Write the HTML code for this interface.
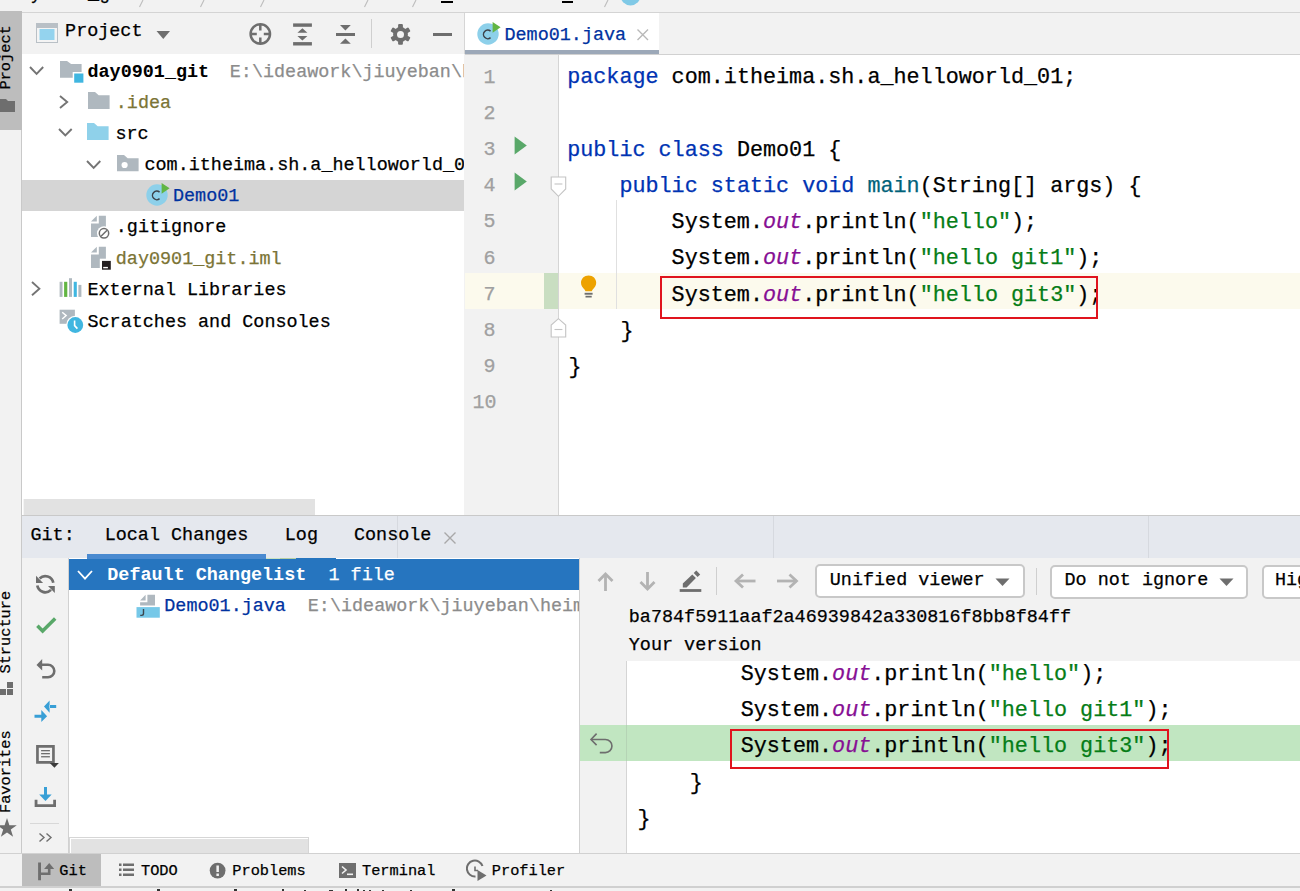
<!DOCTYPE html>
<html><head><meta charset="utf-8">
<style>
*{box-sizing:border-box}
html,body{margin:0;padding:0}
body{width:1300px;height:891px;position:relative;overflow:hidden;background:#f2f2f2;font-family:"Liberation Mono",monospace;color:#000}
.a{position:absolute;display:block}
.t{position:absolute;white-space:pre;line-height:1;-webkit-text-stroke:0.25px currentColor}
.k{color:#0033b3}
.s{color:#067d17}
.f{color:#871094;font-style:italic}
</style></head><body>
<div class="a" style="left:0px;top:0px;width:1300px;height:12px;background:#f2f2f2;"></div>
<div class="a" style="left:22px;top:12px;width:1278px;height:1px;background:#d4d4d4;"></div>
<div class="t" style="left:30.5px;top:-13.71px;font-size:18.43px;color:#000;">y</div>
<div class="t" style="left:88px;top:-13.71px;font-size:18.43px;color:#000;">_g</div>
<svg class="a" style="left:138px;top:0px;" width="7" height="8" viewBox="0 0 7 8"><path d="M5 0 L1.5 7" stroke="#bdbdbd" stroke-width="1.1"/></svg>
<svg class="a" style="left:199px;top:0px;" width="7" height="8" viewBox="0 0 7 8"><path d="M5 0 L1.5 7" stroke="#bdbdbd" stroke-width="1.1"/></svg>
<svg class="a" style="left:259px;top:0px;" width="7" height="8" viewBox="0 0 7 8"><path d="M5 0 L1.5 7" stroke="#bdbdbd" stroke-width="1.1"/></svg>
<svg class="a" style="left:362.5px;top:0px;" width="7" height="8" viewBox="0 0 7 8"><path d="M5 0 L1.5 7" stroke="#bdbdbd" stroke-width="1.1"/></svg>
<svg class="a" style="left:410.5px;top:0px;" width="7" height="8" viewBox="0 0 7 8"><path d="M5 0 L1.5 7" stroke="#bdbdbd" stroke-width="1.1"/></svg>
<svg class="a" style="left:603px;top:0px;" width="7" height="8" viewBox="0 0 7 8"><path d="M5 0 L1.5 7" stroke="#bdbdbd" stroke-width="1.1"/></svg>
<div class="a" style="left:440.6px;top:1px;width:12px;height:2px;background:#000;"></div>
<div class="a" style="left:561.7px;top:1px;width:11.3px;height:2px;background:#000;"></div>
<svg class="a" style="left:618px;top:0px;" width="26" height="8" viewBox="0 0 26 8"><circle cx="12.5" cy="-4.6" r="10" fill="#80c9e6"/></svg>
<div class="a" style="left:0px;top:12px;width:21px;height:842px;background:#f2f2f2;"></div>
<div class="a" style="left:21px;top:12px;width:1px;height:842px;background:#c9c9c9;"></div>
<div class="a" style="left:0px;top:11px;width:22px;height:119px;background:#bdbdbd;"></div>
<div class="t" style="left:0px;top:0px;font-size:15.3px;transform-origin:0 0;transform:translate(-1.5px,89.5px) rotate(-90deg);">Project</div>
<svg class="a" style="left:0px;top:98px;" width="16" height="15" viewBox="0 0 16 15"><path d="M0 1 H6 L8 3 H15 V14 H0 Z" fill="#6e6e6e"/></svg>
<div class="t" style="left:0px;top:0px;font-size:15.3px;transform-origin:0 0;transform:translate(-1.5px,673.5px) rotate(-90deg);">Structure</div>
<svg class="a" style="left:0px;top:681px;" width="14" height="15" viewBox="0 0 14 15"><rect x="0" y="8" width="6" height="6" fill="#6e6e6e"/><rect x="7" y="8" width="6" height="6" fill="#6e6e6e"/><rect x="7" y="1" width="6" height="6" fill="#6e6e6e"/></svg>
<div class="t" style="left:0px;top:0px;font-size:15.3px;transform-origin:0 0;transform:translate(-1.5px,813px) rotate(-90deg);">Favorites</div>
<svg class="a" style="left:-1px;top:816px;" width="18" height="22" viewBox="0 0 18 22"><path d="M8 2 L10.4 9.2 H17.8 L11.8 13.6 L14.1 20.8 L8 16.4 L1.9 20.8 L4.2 13.6 L-1.8 9.2 H5.6 Z" fill="#6e6e6e"/></svg>
<div class="a" style="left:22px;top:13px;width:442px;height:41px;background:#f2f2f2;"></div>
<div class="a" style="left:22px;top:54px;width:442px;height:461px;background:#fff;"></div>
<div class="a" style="left:464px;top:13px;width:1px;height:41px;background:#d6d6d6;"></div>
<div class="a" style="left:464px;top:54px;width:1px;height:461px;background:#f2f2f2;"></div>
<svg class="a" style="left:36px;top:23px;" width="23" height="21" viewBox="0 0 23 21"><rect x="0.5" y="0.5" width="21" height="19" fill="#f4f4f4" stroke="#b9c0c6"/><rect x="1" y="1" width="21" height="4" fill="#b9c0c6"/><rect x="3.5" y="6" width="15" height="11" fill="#94d3ee"/></svg>
<div class="t" style="left:65.1px;top:23.29px;font-size:18.43px;color:#000;">Project</div>
<svg class="a" style="left:156px;top:30px;" width="15" height="10" viewBox="0 0 15 10"><path d="M0.5 1 H14 L7.25 9 Z" fill="#6e6e6e"/></svg>
<svg class="a" style="left:248px;top:22px;" width="25" height="25" viewBox="0 0 25 25"><circle cx="12.3" cy="12" r="9.7" fill="none" stroke="#6e6e6e" stroke-width="2.5"/><path d="M12.3 3 V8.5 M12.3 15.5 V21 M3.3 12 H8.8 M15.8 12 H21.3" stroke="#6e6e6e" stroke-width="2.5"/></svg>
<svg class="a" style="left:288px;top:20px;" width="72" height="28" viewBox="0 0 72 28"><rect x="5.1" y="3.4" width="18.8" height="3.4" fill="#6e6e6e"/><rect x="5.1" y="22.1" width="18.8" height="3.4" fill="#6e6e6e"/><path d="M14.4 8.3 L19.4 12.7 H9.4 Z M14.4 20.5 L19.4 16.1 H9.4 Z" fill="#6e6e6e"/><rect x="48" y="13" width="19" height="3" fill="#6e6e6e"/><path d="M57.4 10.5 L62.8 5 H52 Z M57.4 18.5 L62.8 23.8 H52 Z" fill="#6e6e6e"/></svg>
<div class="a" style="left:371px;top:19px;width:1px;height:29px;background:#cfcfcf;"></div>
<svg class="a" style="left:389px;top:23px;" width="23" height="23" viewBox="0 0 23 23"><g transform="translate(11.5,11.4)" fill="#6e6e6e"><circle r="7.4"/><rect x="-2.4" y="-10.3" width="4.8" height="5" rx="1" transform="rotate(0)"/><rect x="-2.4" y="-10.3" width="4.8" height="5" rx="1" transform="rotate(60)"/><rect x="-2.4" y="-10.3" width="4.8" height="5" rx="1" transform="rotate(120)"/><rect x="-2.4" y="-10.3" width="4.8" height="5" rx="1" transform="rotate(180)"/><rect x="-2.4" y="-10.3" width="4.8" height="5" rx="1" transform="rotate(240)"/><rect x="-2.4" y="-10.3" width="4.8" height="5" rx="1" transform="rotate(300)"/><circle r="3.5" fill="#f2f2f2"/></g></svg>
<div class="a" style="left:433px;top:33px;width:19px;height:2.6px;background:#6e6e6e;"></div>
<div class="a" style="left:22px;top:180px;width:442px;height:31px;background:#d5d5d5;"></div>
<svg class="a" style="left:27.8px;top:65.1px;" width="17.2" height="10.900000000000006" viewBox="0 0 17.2 10.900000000000006"><path d="M2 2 L8.6 8.900000000000006 L15.2 2" fill="none" stroke="#747474" stroke-width="1.9"/></svg>
<svg class="a" style="left:59.6px;top:61.2px;" width="26" height="24" viewBox="0 0 26 24"><path d="M0 0 H7 L11.1 3.1 H21.6 V16.8 H0 Z" fill="#afb8bf"/><rect x="12.7" y="11" width="11.7" height="11.7" fill="#fff"/><rect x="14.2" y="12.5" width="9.2" height="9.2" fill="#40b6e0"/></svg>
<div class="t" style="left:87.5px;top:64.29px;font-size:18.43px;color:#000;font-weight:700;-webkit-text-stroke:0;">day0901_git</div>
<div class="t" style="left:229.8px;top:64.29px;font-size:18.43px;color:#8c8c8c;width:234.2px;overflow:hidden;">E:\ideawork\jiuyeban\heima</div>
<svg class="a" style="left:58px;top:93.5px;" width="11.200000000000003" height="16.099999999999994" viewBox="0 0 11.200000000000003 16.099999999999994"><path d="M2 2 L9.200000000000003 8.049999999999997 L2 14.099999999999994" fill="none" stroke="#747474" stroke-width="1.9"/></svg>
<svg class="a" style="left:87.7px;top:92.1px;" width="24" height="20" viewBox="0 0 24 20"><path d="M0 0 H7 L10.7 3.2 H21.6 V17 H0 Z" fill="#afb8bf"/></svg>
<div class="t" style="left:115.8px;top:95.29px;font-size:18.43px;color:#7b7435;">.idea</div>
<svg class="a" style="left:56.8px;top:127.4px;" width="16.700000000000003" height="10.5" viewBox="0 0 16.700000000000003 10.5"><path d="M2 2 L8.350000000000001 8.5 L14.700000000000003 2" fill="none" stroke="#747474" stroke-width="1.9"/></svg>
<svg class="a" style="left:87.4px;top:123.2px;" width="24" height="20" viewBox="0 0 24 20"><path d="M0 0 H7 L10.7 3.2 H21.6 V17 H0 Z" fill="#8fd1ea"/></svg>
<div class="t" style="left:115.4px;top:126.09px;font-size:18.43px;color:#000;">src</div>
<svg class="a" style="left:84.8px;top:159.3px;" width="17.299999999999997" height="10.899999999999977" viewBox="0 0 17.299999999999997 10.899999999999977"><path d="M2 2 L8.649999999999999 8.899999999999977 L15.299999999999997 2" fill="none" stroke="#747474" stroke-width="1.9"/></svg>
<svg class="a" style="left:116.6px;top:155.4px;" width="24" height="20" viewBox="0 0 24 20"><path d="M0 0 H7 L10.7 3.2 H21.6 V16.3 H0 Z" fill="#afb8bf"/><circle cx="7.6" cy="10" r="3.1" fill="#fff"/></svg>
<div class="t" style="left:144.5px;top:157.19px;font-size:18.43px;color:#000;width:319.5px;overflow:hidden;">com.itheima.sh.a_helloworld_01</div>
<svg class="a" style="left:144.5px;top:181.4px;" width="28" height="28" viewBox="0 0 28 28"><circle cx="12" cy="14" r="10.7" fill="#8dd0ea"/><path d="M14.56 11.11 A4.3 4.3 0 1 0 14.56 17.69" fill="none" stroke="#3d434a" stroke-width="1.5"/><path d="M16.6 1.9000000000000004 L24.6 7.3 L16.6 12.7 Z" fill="#62b543"/></svg>
<div class="t" style="left:173px;top:188.09px;font-size:18.43px;color:#0032a0;">Demo01</div>
<svg class="a" style="left:86px;top:211px;" width="32" height="32" viewBox="0 0 32 32"><path d="M5 10.6 L10.8 4.8 V10.6 Z" fill="#afb8bf"/><path d="M12.8 4.7 H19.9 V25.9 H5 V12.4 H12.8 Z" fill="#afb8bf"/><circle cx="18" cy="22.3" r="7" fill="#fff"/><circle cx="18" cy="22.3" r="4.7" fill="none" stroke="#6e6e6e" stroke-width="1.5"/><path d="M15 25.3 L21.1 19.3" stroke="#6e6e6e" stroke-width="1.5"/></svg>
<div class="t" style="left:115.8px;top:219.49px;font-size:18.43px;color:#000;">.gitignore</div>
<svg class="a" style="left:86px;top:242px;" width="32" height="32" viewBox="0 0 32 32"><path d="M5 10.6 L10.8 4.8 V10.6 Z" fill="#afb8bf"/><path d="M12.8 4.7 H19.9 V25.9 H5 V12.4 H12.8 Z" fill="#afb8bf"/><rect x="13.8" y="16.7" width="13" height="13" fill="#fff"/><rect x="16" y="18.9" width="8.8" height="8.8" fill="#231f20"/><rect x="17.2" y="24.9" width="4.7" height="1.4" fill="#fff"/></svg>
<div class="t" style="left:115.8px;top:250.99px;font-size:18.43px;color:#7b7435;">day0901_git.iml</div>
<svg class="a" style="left:30.1px;top:280.2px;" width="11.399999999999999" height="17.30000000000001" viewBox="0 0 11.399999999999999 17.30000000000001"><path d="M2 2 L9.399999999999999 8.650000000000006 L2 15.300000000000011" fill="none" stroke="#747474" stroke-width="1.9"/></svg>
<svg class="a" style="left:59px;top:277px;" width="24" height="21" viewBox="0 0 24 21"><rect x="0.6" y="4.8" width="2.9" height="15.1" fill="#afb8bf"/><rect x="5.1" y="4.8" width="3.2" height="15.1" fill="#62b543"/><rect x="10" y="1.2" width="3" height="18.7" fill="#afb8bf"/><rect x="14.7" y="4.8" width="3.1" height="15.1" fill="#40b6e0"/><rect x="19.4" y="7.9" width="3" height="12" fill="#afb8bf"/></svg>
<div class="t" style="left:87.5px;top:281.69px;font-size:18.43px;color:#000;">External Libraries</div>
<svg class="a" style="left:59px;top:308px;" width="26" height="28" viewBox="0 0 26 28"><rect x="0.6" y="1.7" width="15.3" height="14.1" fill="#afb8bf"/><path d="M3.2 4.2 L7.2 7.6 L3.2 11" fill="none" stroke="#fff" stroke-width="1.4"/><circle cx="16.3" cy="17" r="9.2" fill="#fff"/><circle cx="16.3" cy="17" r="7.9" fill="#40b6e0"/><path d="M15.6 12.6 V17.6 L18.4 20.6" fill="none" stroke="#fff" stroke-width="1.6"/></svg>
<div class="t" style="left:87.5px;top:313.99px;font-size:18.43px;color:#000;">Scratches and Consoles</div>
<div class="a" style="left:23px;top:499px;width:292px;height:16px;background:#e2e2e2;"></div>
<div class="a" style="left:23px;top:499px;width:1px;height:16px;background:#f4f4f4;"></div>
<div class="a" style="left:465px;top:13px;width:835px;height:41px;background:#f2f2f2;"></div>
<div class="a" style="left:465px;top:13px;width:194px;height:37px;background:#fff;"></div>
<div class="a" style="left:465px;top:50px;width:194px;height:4px;background:#9ca8b8;"></div>
<div class="a" style="left:465px;top:54px;width:835px;height:1px;background:#d1d1d1;"></div>
<svg class="a" style="left:475.5px;top:20.200000000000003px;" width="28" height="28" viewBox="0 0 28 28"><circle cx="12" cy="14" r="10.7" fill="#8dd0ea"/><path d="M14.56 11.11 A4.3 4.3 0 1 0 14.56 17.69" fill="none" stroke="#3d434a" stroke-width="1.5"/><path d="M16.6 1.9000000000000004 L24.6 7.3 L16.6 12.7 Z" fill="#62b543"/></svg>
<div class="t" style="left:504.5px;top:26.69px;font-size:18.43px;color:#0032a0;">Demo01.java</div>
<svg class="a" style="left:636px;top:28px;" width="14" height="14" viewBox="0 0 14 14"><path d="M1.5 1.5 L12 12 M12 1.5 L1.5 12" stroke="#b8b8b8" stroke-width="1.4"/></svg>
<div class="a" style="left:465px;top:55px;width:93px;height:460px;background:#f2f2f2;"></div>
<div class="a" style="left:559px;top:55px;width:741px;height:460px;background:#fff;"></div>
<div class="a" style="left:465px;top:273px;width:835px;height:36px;background:#fcfaed;"></div>
<div class="a" style="left:544px;top:273px;width:13.5px;height:36px;background:#c9dec1;"></div>
<div class="a" style="left:558px;top:55px;width:1px;height:460px;background:#d5d5d5;"></div>
<div class="a" style="left:616px;top:200px;width:1px;height:109px;background:#e0e0e0;"></div>
<div class="t" style="left:483.6px;top:67.60px;font-size:20px;color:#a0a0a0;">1</div>
<div class="t" style="left:483.6px;top:103.80px;font-size:20px;color:#a0a0a0;">2</div>
<div class="t" style="left:483.6px;top:140.00px;font-size:20px;color:#a0a0a0;">3</div>
<div class="t" style="left:483.6px;top:176.20px;font-size:20px;color:#a0a0a0;">4</div>
<div class="t" style="left:483.6px;top:212.40px;font-size:20px;color:#a0a0a0;">5</div>
<div class="t" style="left:483.6px;top:248.60px;font-size:20px;color:#a0a0a0;">6</div>
<div class="t" style="left:483.6px;top:284.80px;font-size:20px;color:#a0a0a0;">7</div>
<div class="t" style="left:483.6px;top:321.00px;font-size:20px;color:#a0a0a0;">8</div>
<div class="t" style="left:483.6px;top:357.20px;font-size:20px;color:#a0a0a0;">9</div>
<div class="t" style="left:472.40000000000003px;top:393.40px;font-size:20px;color:#a0a0a0;">10</div>
<svg class="a" style="left:514px;top:135.5px;" width="14" height="20" viewBox="0 0 14 20"><path d="M0.6 0.5 L12.8 9.5 L0.6 18.6 Z" fill="#59a869"/></svg>
<svg class="a" style="left:514px;top:171.7px;" width="14" height="20" viewBox="0 0 14 20"><path d="M0.6 0.5 L12.8 9.5 L0.6 18.6 Z" fill="#59a869"/></svg>
<svg class="a" style="left:550px;top:176px;" width="17" height="22" viewBox="0 0 17 22"><path d="M1.2 1 H15.7 V13 L8.45 20.3 L1.2 13 Z" fill="#fff" stroke="#c4c4c4" stroke-width="1.1"/><path d="M4.5 8 H12.4" stroke="#c4c4c4" stroke-width="1.1"/></svg>
<svg class="a" style="left:550px;top:317px;" width="17" height="22" viewBox="0 0 17 22"><path d="M1.2 20 H15.7 V8 L8.45 1.7 L1.2 8 Z" fill="#fff" stroke="#c4c4c4" stroke-width="1.1"/><path d="M4.5 12.5 H12.4" stroke="#c4c4c4" stroke-width="1.1"/></svg>
<svg class="a" style="left:579px;top:274px;" width="20" height="25" viewBox="0 0 20 25"><path d="M9.6 1.4 C5.2 1.4 2 4.6 2 8.8 C2 11.6 3.6 13.6 5.5 15.4 L6.5 17.2 H12.7 L13.7 15.4 C15.6 13.6 17.2 11.6 17.2 8.8 C17.2 4.6 14 1.4 9.6 1.4 Z" fill="#eda200"/><rect x="5.6" y="18.8" width="8" height="1.9" fill="#6e6e6e"/><rect x="6.5" y="21.8" width="6.2" height="1.7" fill="#6e6e6e"/></svg>
<div class="t" style="left:567.2px;top:67.37px;font-size:21.75px;color:#000;"><span class="k">package</span> com.itheima.sh.a_helloworld_01;</div>
<div class="t" style="left:567.2px;top:139.77px;font-size:21.75px;color:#000;"><span class="k">public class</span> Demo01 {</div>
<div class="t" style="left:567.2px;top:175.97px;font-size:21.75px;color:#000;">    <span class="k">public static void</span> <span style="color:#00627a">main</span>(String[] args) {</div>
<div class="t" style="left:567.2px;top:212.17px;font-size:21.75px;color:#000;">        System.<span class="f">out</span>.println(<span class="s">"hello"</span>);</div>
<div class="t" style="left:567.2px;top:248.37px;font-size:21.75px;color:#000;">        System.<span class="f">out</span>.println(<span class="s">"hello git1"</span>);</div>
<div class="t" style="left:567.2px;top:284.57px;font-size:21.75px;color:#000;">        System.<span class="f">out</span>.println(<span class="s">"hello git3"</span>);</div>
<div class="t" style="left:568.4000000000001px;top:320.77px;font-size:21.75px;color:#000;">    }</div>
<div class="t" style="left:568.4000000000001px;top:356.97px;font-size:21.75px;color:#000;">}</div>
<div class="a" style="left:660px;top:275.5px;width:437.5px;height:43.8px;border:2px solid #e0141e"></div>
<div class="a" style="left:22px;top:515px;width:1278px;height:43px;background:#e5e8ee;"></div>
<div class="a" style="left:22px;top:515px;width:1278px;height:1px;background:#c9c9c9;"></div>
<div class="a" style="left:397px;top:516px;width:1px;height:42px;background:#d6d9df;"></div>
<div class="a" style="left:773px;top:516px;width:1px;height:42px;background:#d6d9df;"></div>
<div class="a" style="left:1148px;top:516px;width:1px;height:42px;background:#d6d9df;"></div>
<div class="t" style="left:30.5px;top:526.99px;font-size:18.43px;color:#000;">Git:</div>
<div class="t" style="left:104.7px;top:527.29px;font-size:18.43px;color:#000;">Local Changes</div>
<div class="t" style="left:284.8px;top:527.29px;font-size:18.43px;color:#000;">Log</div>
<div class="t" style="left:354px;top:527.29px;font-size:18.43px;color:#000;">Console</div>
<svg class="a" style="left:443px;top:531px;" width="14" height="14" viewBox="0 0 14 14"><path d="M1.5 1.5 L12.5 12.5 M12.5 1.5 L1.5 12.5" stroke="#a8a8a8" stroke-width="1.4"/></svg>
<div class="a" style="left:86.5px;top:554px;width:179.5px;height:4px;background:#4083c9;"></div>
<div class="a" style="left:22px;top:558px;width:46px;height:296px;background:#f2f2f2;"></div>
<div class="a" style="left:68px;top:558px;width:1px;height:296px;background:#d1d1d1;"></div>
<div class="a" style="left:69px;top:558px;width:510px;height:296px;background:#fff;"></div>
<div class="a" style="left:579px;top:558px;width:1px;height:296px;background:#d1d1d1;"></div>
<div class="a" style="left:580px;top:558px;width:720px;height:296px;background:#f2f2f2;"></div>
<svg class="a" style="left:30px;top:568px;" width="32" height="32" viewBox="0 0 32 32"><path d="M9.6 10.5 A8.1 8.1 0 0 1 23.3 14.8" fill="none" stroke="#6e6e6e" stroke-width="2.7"/><path d="M6 7.7 V14.9 H13.1 Z" fill="#6e6e6e"/><path d="M7.3 17.6 A8.1 8.1 0 0 0 21 21.9" fill="none" stroke="#6e6e6e" stroke-width="2.7"/><path d="M24.8 25.1 V18 H18 Z" fill="#6e6e6e"/></svg>
<svg class="a" style="left:30px;top:610px;" width="32" height="32" viewBox="0 0 32 32"><path d="M7.4 15.8 L12.6 21 L25.2 8.4" fill="none" stroke="#59a869" stroke-width="3.5"/></svg>
<svg class="a" style="left:30px;top:653px;" width="32" height="32" viewBox="0 0 32 32"><path d="M12 11.7 H18 A6.3 6.3 0 0 1 18 24.3 H12.2" fill="none" stroke="#6e6e6e" stroke-width="2.6"/><path d="M12.2 6.1 L6.5 11.9 L12.2 17.6 Z" fill="#6e6e6e"/></svg>
<svg class="a" style="left:30px;top:694px;" width="32" height="32" viewBox="0 0 32 32"><path d="M19.6 6.6 L14 12.6 L19.6 18.7 Z M4.5 20.7 H11.5 V23.7 H4.5 Z M11.3 16 L17.1 22.3 L11.3 28 Z M19 11.1 H26.2 V14 H19 Z" fill="#389fd6"/></svg>
<svg class="a" style="left:30px;top:740px;" width="32" height="32" viewBox="0 0 32 32"><path d="M7.45 6.35 H23.45 V22.35 H7.45 Z" fill="none" stroke="#6e6e6e" stroke-width="2.7"/><rect x="11.1" y="10" width="8.8" height="1.3" fill="#6e6e6e"/><rect x="11.1" y="13" width="8.8" height="1.3" fill="#6e6e6e"/><rect x="11.1" y="16.1" width="8.8" height="1.3" fill="#6e6e6e"/><path d="M19.8 23 H28.9 L24.4 27.8 Z" fill="#3c3c3c"/></svg>
<svg class="a" style="left:30px;top:782px;" width="32" height="32" viewBox="0 0 32 32"><path d="M6.05 17.8 V23.6 H24.6 V17.8" fill="none" stroke="#6e6e6e" stroke-width="2.8"/><rect x="14" y="5" width="3" height="8" fill="#389fd6"/><path d="M9.2 12.4 H21.7 L15.45 19 Z" fill="#389fd6"/></svg>
<div class="a" style="left:30px;top:823px;width:29px;height:1px;background:#d8d8d8;"></div>
<svg class="a" style="left:37px;top:831px;" width="17" height="13" viewBox="0 0 17 13"><path d="M2.5 2.5 L7 6.5 L2.5 10.5 M9.5 2.5 L14 6.5 L9.5 10.5" fill="none" stroke="#6e6e6e" stroke-width="1.4"/></svg>
<div class="a" style="left:69px;top:559px;width:510px;height:31px;background:#2675bf;"></div>
<div class="a" style="left:86.5px;top:554px;width:179.5px;height:5px;background:#4a8ad0;"></div>
<div class="a" style="left:266px;top:558px;width:14px;height:1px;background:#c8e3c3;"></div>
<div class="a" style="left:280px;top:558px;width:16px;height:1px;background:#b5cfa5;"></div>
<div class="a" style="left:296px;top:558px;width:40px;height:1px;background:#2675bf;"></div>
<svg class="a" style="left:76px;top:568.6px;" width="18" height="11.699999999999932" viewBox="0 0 18 11.699999999999932"><path d="M2 2 L9.0 9.699999999999932 L16 2" fill="none" stroke="#fff" stroke-width="1.8"/></svg>
<div class="t" style="left:107.3px;top:566.99px;font-size:18.43px;color:#fff;font-weight:700;-webkit-text-stroke:0;">Default Changelist</div>
<div class="t" style="left:328.5px;top:566.99px;font-size:18.43px;color:#fff;">1 file</div>
<svg class="a" style="left:132px;top:590px;" width="32" height="32" viewBox="0 0 32 32"><path d="M8.1 10.6 L13.6 4.8 V10.6 Z" fill="#afb8bf"/><path d="M15.4 4.7 H23 V15.4 H8.1 V12.2 H15.4 Z" fill="#afb8bf"/><rect x="4.5" y="17.1" width="23.3" height="10.6" fill="#76c8e8"/><path d="M11.5 18.9 V23.6 Q11.5 25.4 9.6 25.4 H8.2" fill="none" stroke="#3c454d" stroke-width="1.4"/></svg>
<div class="t" style="left:164.3px;top:598.49px;font-size:18.43px;color:#0032a0;">Demo01.java</div>
<div class="t" style="left:307.8px;top:598.49px;font-size:18.43px;color:#8c8c8c;width:271.2px;overflow:hidden;">E:\ideawork\jiuyeban\heima</div>
<div class="a" style="left:69px;top:837px;width:240px;height:18px;background:#fff;border:1px solid #d6d6d6"></div>
<div class="a" style="left:70.5px;top:838.5px;width:237px;height:15.5px;background:#e2e2e2;"></div>
<svg class="a" style="left:596px;top:571px;" width="20" height="22" viewBox="0 0 20 22"><path d="M9.5 3 V20" stroke="#b3b3b3" stroke-width="2.8"/><path d="M2.5 10 L9.5 3 L16.5 10" fill="none" stroke="#b3b3b3" stroke-width="2.8"/></svg>
<svg class="a" style="left:638px;top:571px;" width="20" height="22" viewBox="0 0 20 22"><path d="M9.5 1 V18" stroke="#b3b3b3" stroke-width="2.8"/><path d="M2.5 11 L9.5 18 L16.5 11" fill="none" stroke="#b3b3b3" stroke-width="2.8"/></svg>
<svg class="a" style="left:674px;top:565px;" width="32" height="32" viewBox="0 0 32 32"><path d="M8.8 22.6 V18.6 L18.3 9.4 L21.9 13 L12.6 22.6 Z" fill="#6e6e6e"/><path d="M19.7 8 L22.3 5.5 L26.2 9.4 L23.6 11.9 Z" fill="#6e6e6e"/><rect x="5.7" y="24.1" width="21.6" height="2.8" fill="#6e6e6e"/></svg>
<div class="a" style="left:716px;top:567px;width:1px;height:27.5px;background:#cfcfcf;"></div>
<svg class="a" style="left:733px;top:572px;" width="24" height="18" viewBox="0 0 24 18"><path d="M3 9 H22.5" stroke="#b3b3b3" stroke-width="2.8"/><path d="M10 2.5 L3 9 L10 15.5" fill="none" stroke="#b3b3b3" stroke-width="2.8"/></svg>
<svg class="a" style="left:776px;top:572px;" width="24" height="18" viewBox="0 0 24 18"><path d="M1 9 H20.5" stroke="#b3b3b3" stroke-width="2.8"/><path d="M13.5 2.5 L20.5 9 L13.5 15.5" fill="none" stroke="#b3b3b3" stroke-width="2.8"/></svg>
<div class="a" style="left:815px;top:564.3px;width:209.5px;height:34.2px;background:#fff;border:2px solid #c8c8c8;border-radius:5px"></div>
<div class="t" style="left:829.8px;top:572.49px;font-size:18.43px;color:#000;">Unified viewer</div>
<svg class="a" style="left:995px;top:578px;" width="16" height="10" viewBox="0 0 16 10"><path d="M0.5 0.5 H14.5 L7.5 8 Z" fill="#6e6e6e"/></svg>
<div class="a" style="left:1036px;top:567.5px;width:1px;height:27px;background:#cfcfcf;"></div>
<div class="a" style="left:1050px;top:564.5px;width:198px;height:34px;background:#fff;border:2px solid #c8c8c8;border-radius:5px"></div>
<div class="t" style="left:1064.5px;top:572.49px;font-size:18.43px;color:#000;">Do not ignore</div>
<svg class="a" style="left:1218.5px;top:578px;" width="16" height="10" viewBox="0 0 16 10"><path d="M0.5 0.5 H14.5 L7.5 8 Z" fill="#6e6e6e"/></svg>
<div class="a" style="left:1262px;top:564.5px;width:80px;height:34px;background:#fff;border:2px solid #c8c8c8;border-radius:5px"></div>
<div class="t" style="left:1275px;top:572.49px;font-size:18.43px;color:#000;">Highlight words</div>
<div class="t" style="left:628.8px;top:609.29px;font-size:18.43px;color:#000;">ba784f5911aaf2a46939842a330816f8bb8f84ff</div>
<div class="t" style="left:628.8px;top:637.49px;font-size:18.43px;color:#000;">Your version</div>
<div class="a" style="left:580px;top:661px;width:46px;height:193px;background:#f2f2f2;"></div>
<div class="a" style="left:626px;top:661px;width:1px;height:193px;background:#d5d5d5;"></div>
<div class="a" style="left:627px;top:661px;width:673px;height:193px;background:#fff;"></div>
<div class="a" style="left:580px;top:725px;width:720px;height:36px;background:#c1e6c1;"></div>
<div class="a" style="left:626px;top:725px;width:1px;height:36px;background:#b5d4b5;"></div>
<svg class="a" style="left:586px;top:728px;" width="32" height="32" viewBox="0 0 32 32"><path d="M5.2 11.5 H19.4 A6.55 6.55 0 0 1 19.4 24.6 H13.8" fill="none" stroke="#6e6e6e" stroke-width="1.6"/><path d="M10.6 5.6 L5 11.5 L10.6 17.1" fill="none" stroke="#6e6e6e" stroke-width="1.6"/></svg>
<div class="t" style="left:636.3px;top:663.67px;font-size:21.75px;color:#000;">        System.<span class="f">out</span>.println(<span class="s">"hello"</span>);</div>
<div class="t" style="left:636.3px;top:700.07px;font-size:21.75px;color:#000;">        System.<span class="f">out</span>.println(<span class="s">"hello git1"</span>);</div>
<div class="t" style="left:636.3px;top:736.47px;font-size:21.75px;color:#000;">        System.<span class="f">out</span>.println(<span class="s">"hello git3"</span>);</div>
<div class="t" style="left:637.5999999999999px;top:772.87px;font-size:21.75px;color:#000;">    }</div>
<div class="t" style="left:637.5999999999999px;top:809.27px;font-size:21.75px;color:#000;">}</div>
<div class="a" style="left:730px;top:728.7px;width:439px;height:40px;border:2px solid #e0141e"></div>
<div class="a" style="left:0px;top:853px;width:1300px;height:1px;background:#d1d1d1;"></div>
<div class="a" style="left:0px;top:854px;width:1300px;height:32px;background:#f2f2f2;"></div>
<div class="a" style="left:22px;top:854px;width:79px;height:32px;background:#bdbdbd;"></div>
<div class="a" style="left:0px;top:886px;width:1300px;height:2px;background:#d0d0d0;"></div>
<div class="a" style="left:0px;top:888px;width:1300px;height:3px;background:#f2f2f2;"></div>
<svg class="a" style="left:32px;top:856px;" width="28" height="28" viewBox="0 0 28 28"><path d="M6.1 6.6 H9 V16.5 H15.9 V12.3 H18.5 V19 H9 V24.2 H6.1 Z" fill="#6e6e6e"/><path d="M12.1 12.9 L17.2 7.1 L22.2 12.9 Z" fill="#6e6e6e"/></svg>
<div class="t" style="left:59.3px;top:864.37px;font-size:15.3px;color:#000;">Git</div>
<svg class="a" style="left:118px;top:862px;" width="18" height="17" viewBox="0 0 18 17"><rect x="1" y="1.5" width="2.5" height="2.5" fill="#6e6e6e"/><rect x="5" y="1.5" width="11" height="2.5" fill="#6e6e6e"/><rect x="1" y="6.5" width="2.5" height="2.5" fill="#6e6e6e"/><rect x="5" y="6.5" width="11" height="2.5" fill="#6e6e6e"/><rect x="1" y="11.5" width="2.5" height="2.5" fill="#6e6e6e"/><rect x="5" y="11.5" width="11" height="2.5" fill="#6e6e6e"/></svg>
<div class="t" style="left:141px;top:864.37px;font-size:15.3px;color:#000;">TODO</div>
<svg class="a" style="left:208px;top:861px;" width="19" height="19" viewBox="0 0 19 19"><circle cx="9.6" cy="9.6" r="7.9" fill="#6e6e6e"/><rect x="8.4" y="4.5" width="2.5" height="6.5" fill="#f2f2f2"/><rect x="8.4" y="12.5" width="2.5" height="2.5" fill="#f2f2f2"/></svg>
<div class="t" style="left:232.3px;top:864.37px;font-size:15.3px;color:#000;">Problems</div>
<svg class="a" style="left:338px;top:862px;" width="19" height="17" viewBox="0 0 19 17"><rect x="1" y="1" width="17" height="15" fill="#6e6e6e"/><path d="M4 4.5 L8 8 L4 11.5" fill="none" stroke="#f2f2f2" stroke-width="1.6"/><rect x="9" y="11.5" width="6" height="1.6" fill="#f2f2f2"/></svg>
<div class="t" style="left:362px;top:864.37px;font-size:15.3px;color:#000;">Terminal</div>
<svg class="a" style="left:466px;top:859px;" width="22" height="24" viewBox="0 0 22 24"><path d="M16.5 7 A8 8 0 1 0 9.5 17.5" fill="none" stroke="#6e6e6e" stroke-width="2"/><path d="M9 7.5 V11.5 H12" fill="none" stroke="#6e6e6e" stroke-width="1.6"/><path d="M11.5 11 L20.5 16.5 L11.5 22 Z" fill="#6e6e6e"/></svg>
<div class="t" style="left:491.8px;top:864.37px;font-size:15.3px;color:#000;">Profiler</div>
<div class="a" style="left:68.5px;top:889px;width:3px;height:2px;background:#333;"></div>
<div class="a" style="left:157px;top:889px;width:3px;height:2px;background:#333;"></div>
<div class="a" style="left:233.5px;top:889px;width:3px;height:2px;background:#333;"></div>
<div class="a" style="left:282px;top:889px;width:2px;height:2px;background:#333;"></div>
<div class="a" style="left:304px;top:889.5px;width:2px;height:1.5px;background:#333;"></div>
<div class="a" style="left:329px;top:889.5px;width:4px;height:1.5px;background:#333;"></div>
<div class="a" style="left:344.5px;top:889px;width:2px;height:2px;background:#333;"></div>
<div class="a" style="left:357px;top:889px;width:2px;height:2px;background:#333;"></div>
<div class="a" style="left:363px;top:889.5px;width:2px;height:1.5px;background:#333;"></div>
<div class="a" style="left:369px;top:889.5px;width:2px;height:1.5px;background:#333;"></div>
<div class="a" style="left:382px;top:889.5px;width:2px;height:1.5px;background:#333;"></div>
<div class="a" style="left:409.5px;top:889.5px;width:2px;height:1.5px;background:#333;"></div>
<div class="a" style="left:452px;top:889px;width:3px;height:2px;background:#333;"></div>
<div class="a" style="left:549.5px;top:889.5px;width:2px;height:1.5px;background:#333;"></div>
</body></html>
